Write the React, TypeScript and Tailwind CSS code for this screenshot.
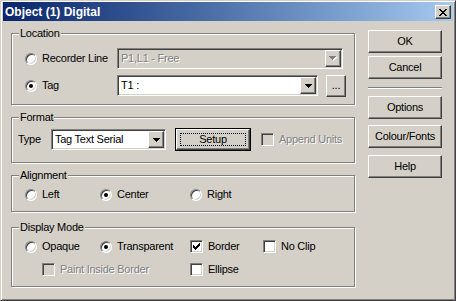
import type { ReactNode } from "react";

const CLOSE_X = ["XX....XX", ".XX..XX.", "..XXXX..", "...XX...", "..XXXX..", ".XX..XX.", "XX....XX"];
const ARROW = ["XXXXXXX", ".XXXXX.", "..XXX..", "...X..."];
const CHECK = ["......X", ".....XX", "X...XXX", "XX.XXX.", "XXXXX..", ".XXX...", "..X...."];

const raised =
  "border border-t-white border-l-white border-r-[#404040] border-b-[#404040] shadow-[inset_-1px_-1px_0_#808080]";
const sunken =
  "border border-t-[#808080] border-l-[#808080] border-r-white border-b-white shadow-[inset_1px_1px_0_#404040,inset_-1px_-1px_0_#d4d0c8]";
const greyText = "text-[#808080] [text-shadow:1px_1px_0_#fff]";

function Pixels({ rows, color, shadow }: { rows: string[]; color: string; shadow?: string }) {
  const rects: ReactNode[] = [];
  rows.forEach((row, y) =>
    row.split("").forEach((c, x) => {
      if (c !== "X") return;
      if (shadow) rects.push(<rect key={`s${x}-${y}`} x={x + 1} y={y + 1} width={1} height={1} fill={shadow} />);
      rects.push(<rect key={`${x}-${y}`} x={x} y={y} width={1} height={1} fill={color} />);
    })
  );
  const w = rows[0].length + (shadow ? 1 : 0);
  const h = rows.length + (shadow ? 1 : 0);
  return (
    <svg width={w} height={h} viewBox={`0 0 ${w} ${h}`} shapeRendering="crispEdges">
      {rects}
    </svg>
  );
}

function Radio({ checked, label }: { checked?: boolean; label: string }) {
  return (
    <span className="flex items-center">
      <span className="flex h-3 w-3 items-center justify-center rounded-full border border-t-[#808080] border-l-[#808080] border-r-white border-b-white bg-white shadow-[inset_1px_1px_0_#404040,inset_-1px_-1px_0_#d4d0c8]">
        {checked && <span className="h-1 w-1 rounded-full bg-black" />}
      </span>
      <span className="ml-[5px] leading-[13px]">{label}</span>
    </span>
  );
}

function Check({ checked, disabled, label }: { checked?: boolean; disabled?: boolean; label: string }) {
  return (
    <span className="flex items-center">
      <span
        className={`flex h-[13px] w-[13px] items-center justify-center ${sunken} ${disabled ? "bg-[#d4d0c8]" : "bg-white"}`}
      >
        {checked && <Pixels rows={CHECK} color="#000" />}
      </span>
      <span className={`ml-[5px] leading-[13px] ${disabled ? greyText : ""}`}>{label}</span>
    </span>
  );
}

function Combo({ value, width, disabled }: { value: string; width: string; disabled?: boolean }) {
  return (
    <div className={`flex h-[21px] p-[1px] ${width} ${sunken} ${disabled ? "bg-[#d4d0c8]" : "bg-white"}`}>
      <div className={`flex flex-1 items-center pl-[2px] ${disabled ? greyText : ""}`}>{value}</div>
      <div className={`flex w-4 items-center justify-center bg-[#d4d0c8] ${raised}`}>
        {disabled ? <Pixels rows={ARROW} color="#808080" shadow="#fff" /> : <Pixels rows={ARROW} color="#000" />}
      </div>
    </div>
  );
}

function Group({ title, height, className, children }: { title: string; height: string; className?: string; children: ReactNode }) {
  return (
    <div
      className={`relative w-[344px] border border-[#808080] shadow-[inset_1px_1px_0_#fff,1px_1px_0_#fff] ${height} ${className ?? ""}`}
    >
      <span className="absolute -top-[7px] left-[7px] bg-[#d4d0c8] px-[1px] leading-[13px]">{title}</span>
      {children}
    </div>
  );
}

function Button({ label, className }: { label: string; className?: string }) {
  return (
    <div className={`flex h-[23px] w-[74px] items-center justify-center ${raised} ${className ?? ""}`}>{label}</div>
  );
}

export default function App() {
  return (
    <div className="h-[301px] w-[456px] overflow-hidden border border-t-[#d4d0c8] border-l-[#d4d0c8] border-r-[#404040] border-b-[#404040] bg-[#d4d0c8] px-[2px] pt-[1px] font-['Liberation_Sans',Arial,sans-serif] text-[11px] tracking-[-0.25px] text-black shadow-[inset_1px_1px_0_#fff,inset_-1px_-1px_0_#808080]">
      <div className="flex h-[19px] items-center bg-linear-to-r from-[#0a246a] to-[#a6caf0] pl-[2px] pr-[2px] pt-[1px]">
        <span className="text-[12px] font-bold tracking-normal text-white">Object (1) Digital</span>
        <div className={`ml-auto flex h-[14px] w-4 items-center justify-center bg-[#d4d0c8] ${raised}`}>
          <Pixels rows={CLOSE_X} color="#000" />
        </div>
      </div>

      <div className="flex">
        <div className="ml-[8px] pt-[12px]">
          <Group title="Location" height="h-[72px]" className="pl-[13px] pt-[14px]">
            <div className="flex h-[21px] items-center">
              <div className="w-[92px]">
                <Radio label="Recorder Line" />
              </div>
              <Combo value="P1,L1 - Free" width="w-[226px]" disabled />
            </div>
            <div className="mt-[6px] flex h-[21px] items-center">
              <div className="w-[92px]">
                <Radio checked label="Tag" />
              </div>
              <Combo value="T1 :" width="w-[201px]" />
              <div className={`ml-[8px] flex h-[22px] w-[20px] items-center justify-center ${raised}`}>...</div>
            </div>
          </Group>

          <Group title="Format" height="h-[46px]" className="mt-[12px] pl-[6px] pt-[10px]">
            <div className="flex h-[23px] items-center">
              <span className="w-[33px]">Type</span>
              <Combo value="Tag Text Serial" width="w-[115px]" />
              <div className="ml-[9px] h-[23px] w-[76px] border border-black">
                <div className={`relative flex h-full items-center justify-center ${raised}`}>
                  <span className="absolute inset-[3px] border border-dotted border-black" />
                  Setup
                </div>
              </div>
              <div className="ml-[10px]">
                <Check disabled label="Append Units" />
              </div>
            </div>
          </Group>

          <Group title="Alignment" height="h-[37px]" className="mt-[12px] pl-[13px] pt-[12px]">
            <div className="flex h-[13px] items-center">
              <div className="w-[75px]">
                <Radio label="Left" />
              </div>
              <div className="w-[90px]">
                <Radio checked label="Center" />
              </div>
              <Radio label="Right" />
            </div>
          </Group>

          <Group title="Display Mode" height="h-[60px]" className="mt-[15px] pl-[13px] pt-[12px]">
            <div className="flex h-[13px] items-center">
              <div className="w-[75px]">
                <Radio label="Opaque" />
              </div>
              <div className="w-[90px]">
                <Radio checked label="Transparent" />
              </div>
              <div className="w-[73px]">
                <Check checked label="Border" />
              </div>
              <Check label="No Clip" />
            </div>
            <div className="mt-[10px] flex h-[13px] items-center">
              <div className="ml-[17px] w-[148px]">
                <Check disabled label="Paint Inside Border" />
              </div>
              <Check label="Ellipse" />
            </div>
          </Group>
        </div>

        <div className="ml-[13px] flex flex-col pt-[9px]">
          <Button label="OK" />
          <Button label="Cancel" className="mt-[3px]" />
          <div className="mt-[8px] h-[2px] w-[74px] border-t border-b border-t-[#808080] border-b-white" />
          <Button label="Options" className="mt-[7px]" />
          <Button label="Colour/Fonts" className="mt-[6px]" />
          <Button label="Help" className="mt-[7px]" />
        </div>
      </div>
    </div>
  );
}
